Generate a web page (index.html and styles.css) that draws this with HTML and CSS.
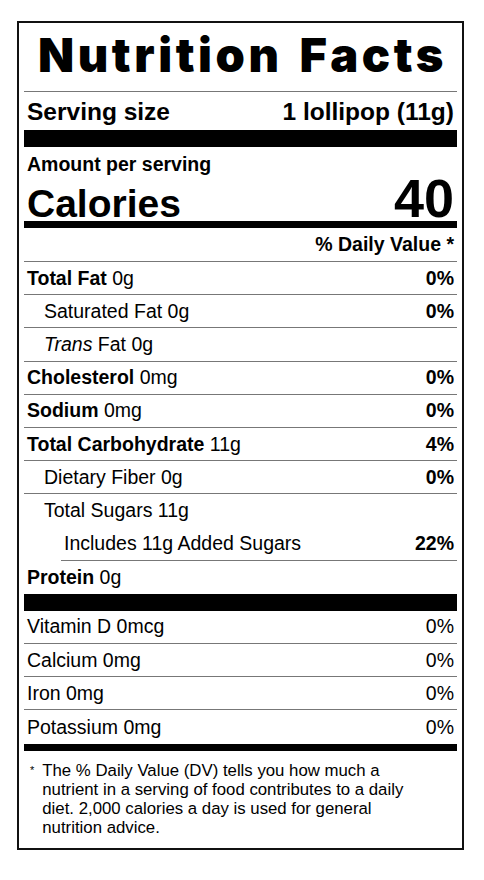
FILE: index.html
```html
<!DOCTYPE html>
<html lang="en">

<head>
  <meta charset="UTF-8" />
  <meta name="viewport" content="width=device-width, initial-scale=1.0" />
  <title>Nutrition Facts</title>
  <link rel="stylesheet" href="styles.css">
</head>

<body>
  <div class="label">
    <h1 class="title">Nutrition Facts</h1>

    <div class="serving">
      <span>Serving size</span>
      <span>1 lollipop (11g)</span>
    </div>
    <div class="bar bar-lg"></div>

    <div class="calories">
      <p class="amount">Amount per serving</p>
      <div class="cal-row">
        <span class="cal-label">Calories</span>
        <span class="cal-value">40</span>
      </div>
    </div>
    <div class="bar bar-md"></div>

    <div class="row dv-head"><span></span><b>% Daily Value *</b></div>

    <div class="row"><span><b>Total Fat</b> 0g</span><b>0%</b></div>
    <div class="row indent"><span>Saturated Fat 0g</span><b>0%</b></div>
    <div class="row indent"><span><i>Trans</i> Fat 0g</span></div>
    <div class="row"><span><b>Cholesterol</b> 0mg</span><b>0%</b></div>
    <div class="row"><span><b>Sodium</b> 0mg</span><b>0%</b></div>
    <div class="row"><span><b>Total Carbohydrate</b> 11g</span><b>4%</b></div>
    <div class="row indent"><span>Dietary Fiber 0g</span><b>0%</b></div>
    <div class="row indent no-line"><span>Total Sugars 11g</span></div>
    <div class="row indent-2"><span>Includes 11g Added Sugars</span><b>22%</b></div>
    <div class="row no-line"><span><b>Protein</b> 0g</span></div>
    <div class="bar bar-lg"></div>

    <div class="row"><span>Vitamin D 0mcg</span><span>0%</span></div>
    <div class="row"><span>Calcium 0mg</span><span>0%</span></div>
    <div class="row"><span>Iron 0mg</span><span>0%</span></div>
    <div class="row no-line"><span>Potassium 0mg</span><span>0%</span></div>
    <div class="bar bar-md"></div>

    <div class="footnote">
      <span class="star">*</span>
      <p>The % Daily Value (DV) tells you how much a nutrient in a serving of food contributes to a daily diet. 2,000 calories a day is used for general nutrition advice.</p>
    </div>
  </div>
</body>

</html>
```

FILE: styles.css
```css
/* Page */
body {
  margin: 0;
  padding: 21px 20px 0 17px;
  background: #fff;
  color: #000;
  font-family: 'Liberation Sans', Arial, Helvetica, sans-serif;
}

/* Label box */
.label {
  width: 433px;
  border: 2px solid #111;
  padding: 0 5px;
}

.title {
  margin: 0;
  height: 68px;
  padding-left: 4px;
  border-bottom: 1px solid #777;
  font-family: Inter, 'Liberation Sans', sans-serif;
  font-weight: 900;
  font-size: 47px;
  line-height: 63px;
  text-align: center;
  letter-spacing: 3.6px;
  word-spacing: 4px;
}

.serving {
  display: flex;
  justify-content: space-between;
  align-items: center;
  height: 38px;
  padding: 2px 3px 0;
  box-sizing: border-box;
  font-size: 24.5px;
  font-weight: bold;
}

.bar {
  background: #000;
}

.bar-lg {
  height: 17px;
}

.bar-md {
  height: 7px;
}

.bar-md:last-of-type {
  height: 8px;
}

.calories {
  height: 74px;
  padding: 6px 3px 0;
  box-sizing: border-box;
}

.amount {
  margin: 0;
  font-size: 19.5px;
  font-weight: bold;
  line-height: 22px;
}

.cal-row {
  display: flex;
  justify-content: space-between;
  align-items: baseline;
  font-weight: bold;
  line-height: 46px;
}

.cal-label {
  font-size: 39px;
}

.cal-value {
  font-size: 54px;
}

/* Nutrient rows */
.row {
  display: flex;
  justify-content: space-between;
  align-items: center;
  height: 32.2px;
  padding: 0 3px;
  border-bottom: 1px solid #777;
  font-size: 19.5px;
}

.dv-head {
  height: 33px;
}

.indent {
  padding-left: 20px;
}

.indent-2 {
  margin-left: 37px;
  padding-left: 3px;
}

.no-line {
  border-bottom: none;
  height: 33.2px;
}

.footnote {
  display: flex;
  gap: 8px;
  height: 97px;
  padding: 10px 3px 0 6px;
  box-sizing: border-box;
}

.star {
  font-size: 11px;
  line-height: 18px;
}

.footnote p {
  margin: 0;
  max-width: 374px;
  font-size: 16.8px;
  line-height: 19px;
}
```
